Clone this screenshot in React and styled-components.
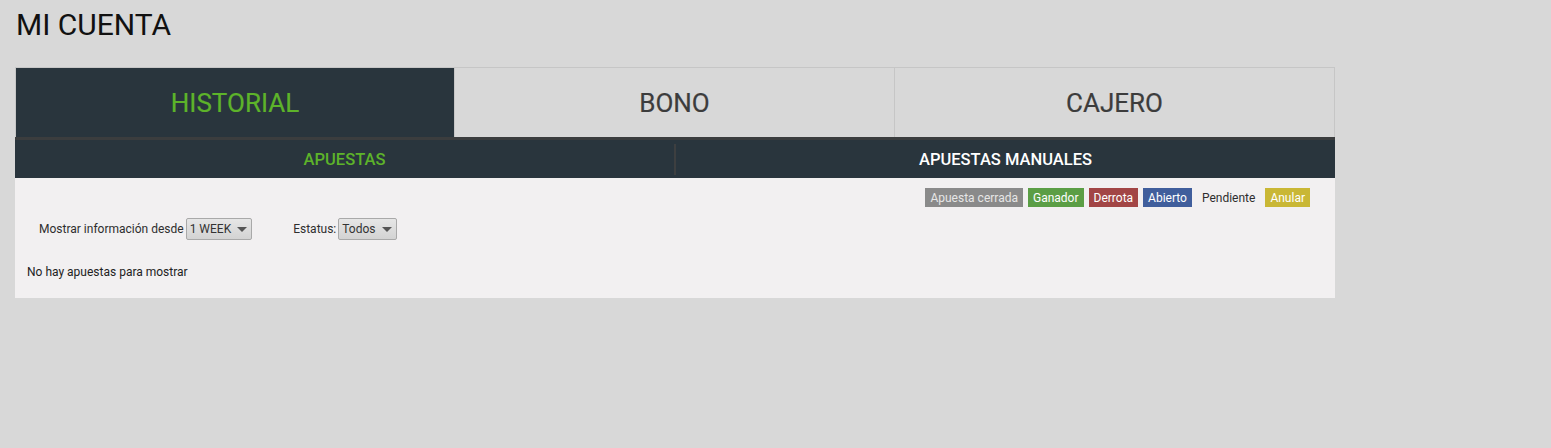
import React from "react";
import styled, { createGlobalStyle } from "styled-components";

const Global = createGlobalStyle`
  html, body { margin: 0; padding: 0; background: #d8d8d8; }
  body { font-family: Roboto, "Liberation Sans", Arial, sans-serif; }
  * { box-sizing: border-box; }
`;

const Page = styled.div`
  padding: 8px 15px 0 15px;
  width: 1350px;
`;

const Title = styled.h1`
  margin: 0 0 0 1px;
  font-size: 30px;
  font-weight: 400;
  color: #111;
  line-height: 34px;
  height: 59px;
`;

const Tabs = styled.div`
  display: grid;
  grid-template-columns: 440px 440px 440px;
  height: 70px;
`;

const Tab = styled.div`
  display: flex;
  align-items: center;
  justify-content: center;
  font-size: 26px;
  color: ${(p) => (p.$active ? "#5db32a" : "#3c3c3c")};
  background: ${(p) => (p.$active ? "#29353d" : "#d8d8d8")};
  border: 1px solid #c6c6c6;
  border-bottom: none;
  border-left: ${(p) => (p.$first ? "1px solid #c6c6c6" : "none")};
  padding-top: 1px;
  -webkit-text-stroke: 0.2px currentColor;
`;

const SubNav = styled.div`
  display: flex;
  align-items: center;
  height: 41px;
  background: #29353d;
  border-top: 3px solid #3b3d3e;
`;

const SubTab = styled.div`
  flex: 1;
  text-align: center;
  font-size: 16.5px;
  font-weight: 500;
  color: ${(p) => (p.$active ? "#5db32a" : "#ffffff")};
`;

const Divider = styled.div`
  width: 2px;
  height: 31px;
  background: #3d3f40;
`;

const Content = styled.div`
  background: #f2f0f1;
  height: 120px;
  padding: 10px 25px 0 12px;
`;

const Legend = styled.div`
  display: flex;
  justify-content: flex-end;
  gap: 5px;
  height: 19px;
`;

const Badge = styled.span`
  display: inline-flex;
  align-items: center;
  height: 19px;
  padding: 0 5px;
  font-size: 12px;
  color: ${(p) => p.$fg || "#fff"};
  background: ${(p) => p.$bg || "transparent"};
`;

const Filters = styled.div`
  display: flex;
  align-items: center;
  margin-top: 11px;
  padding-left: 12px;
  height: 22px;
  gap: 41px;
`;

const Field = styled.label`
  display: flex;
  align-items: center;
  gap: 2px;
  font-size: 12px;
  color: #2e2e2e;
`;

const Select = styled.span`
  display: inline-flex;
  align-items: center;
  justify-content: space-between;
  gap: 6px;
  height: 22px;
  padding: 0 4px 0 3px;
  border: 1px solid #a9a9a9;
  border-radius: 2px;
  background: linear-gradient(#e6e6e6, #d3d3d3);
  color: #333;
  font-size: 12px;
`;

const Caret = styled.span`
  width: 0;
  height: 0;
  border-left: 5px solid transparent;
  border-right: 5px solid transparent;
  border-top: 5px solid #555;
`;

const Empty = styled.div`
  margin-top: 25px;
  font-size: 12px;
  color: #222;
`;

export default function App() {
  return (
    <>
      <Global />
      <Page>
        <Title>MI CUENTA</Title>
        <Tabs>
          <Tab $active $first>HISTORIAL</Tab>
          <Tab>BONO</Tab>
          <Tab>CAJERO</Tab>
        </Tabs>
        <SubNav>
          <SubTab $active>APUESTAS</SubTab>
          <Divider />
          <SubTab>APUESTAS MANUALES</SubTab>
        </SubNav>
        <Content>
          <Legend>
            <Badge $bg="#8a8a8a" $fg="#e6e6e6">Apuesta cerrada</Badge>
            <Badge $bg="#5b9e45">Ganador</Badge>
            <Badge $bg="#a24545">Derrota</Badge>
            <Badge $bg="#405e9c">Abierto</Badge>
            <Badge $fg="#2e2e2e">Pendiente</Badge>
            <Badge $bg="#c9b735">Anular</Badge>
          </Legend>
          <Filters>
            <Field>
              Mostrar información desde
              <Select>
                1 WEEK <Caret />
              </Select>
            </Field>
            <Field>
              Estatus:
              <Select>
                Todos <Caret />
              </Select>
            </Field>
          </Filters>
          <Empty>No hay apuestas para mostrar</Empty>
        </Content>
      </Page>
    </>
  );
}
